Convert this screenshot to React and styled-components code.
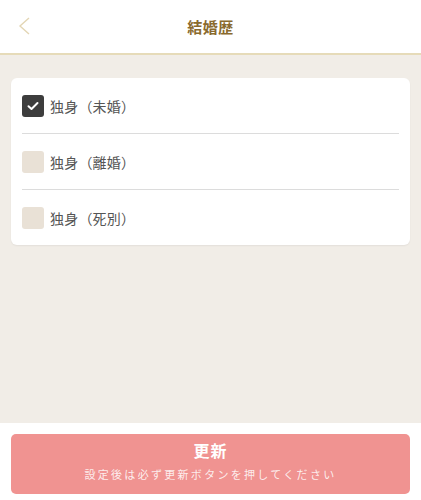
import React, { useState } from "react";
import styled, { createGlobalStyle } from "styled-components";

const Global = createGlobalStyle`
  html, body { margin: 0; padding: 0; height: 100%; }
  body { font-family: "Noto Sans CJK JP", "Noto Sans", sans-serif; background: #f1ede7; }
  #root { height: 100%; }
`;

const Page = styled.div`
  height: 500px;
  display: flex;
  flex-direction: column;
  background: #f1ede7;
`;

const Header = styled.header`
  height: 53px;
  background: #fff;
  border-bottom: 2px solid #e6dbb9;
  display: flex;
  align-items: center;
  justify-content: center;
  position: relative;
  flex-shrink: 0;
`;

const Back = styled.button`
  position: absolute;
  left: 12px;
  top: 14px;
  width: 24px;
  height: 24px;
  padding: 0;
  border: none;
  background: none;
  display: flex;
  align-items: center;
  justify-content: center;
`;

const Title = styled.h1`
  margin: 0;
  font-size: 15px;
  font-weight: 700;
  color: #8a6a2e;
  letter-spacing: 0.5px;
`;

const Main = styled.main`
  flex: 1;
  padding: 23px 11px 0;
`;

const Card = styled.div`
  background: #fff;
  border-radius: 6px;
  padding: 0 11px;
  box-shadow: 0 1px 2px rgba(0, 0, 0, 0.06);
`;

const Row = styled.label`
  height: 55px;
  display: flex;
  align-items: center;
  gap: 6px;
  border-top: ${(p) => (p.$first ? "none" : "1px solid #dcdcdc")};
  cursor: pointer;
`;

const Box = styled.span`
  width: 22px;
  height: 22px;
  border-radius: 3px;
  background: ${(p) => (p.$checked ? "#3d3d3d" : "#e9e1d6")};
  display: flex;
  align-items: center;
  justify-content: center;
  flex-shrink: 0;
`;

const Label = styled.span`
  font-size: 14px;
  color: #555;
  letter-spacing: 0.2px;
`;

const Footer = styled.footer`
  background: #fff;
  padding: 11px 11px 6px;
  flex-shrink: 0;
`;

const Submit = styled.button`
  width: 100%;
  height: 60px;
  border: none;
  border-radius: 5px;
  background: #f09391;
  display: flex;
  flex-direction: column;
  align-items: center;
  justify-content: center;
  gap: 7px;
  padding: 0 0 6px;
  font-family: inherit;
  color: #fff;
`;

const SubmitMain = styled.span`
  font-size: 16px;
  font-weight: 700;
  letter-spacing: 1px;
  line-height: 20px;
`;

const SubmitSub = styled.span`
  font-size: 11px;
  letter-spacing: 2.3px;
  line-height: 15px;
  color: rgba(255, 255, 255, 0.85);
`;

const options = ["独身（未婚）", "独身（離婚）", "独身（死別）"];

export default function App() {
  const [sel, setSel] = useState(0);
  return (
    <Page>
      <Global />
      <Header>
        <Back aria-label="戻る">
          <svg width="14" height="20" viewBox="0 0 14 20">
            <path d="M12 2 L3 10 L12 18" fill="none" stroke="#e3d6b4" strokeWidth="1.4" />
          </svg>
        </Back>
        <Title>結婚歴</Title>
      </Header>
      <Main>
        <Card>
          {options.map((o, i) => (
            <Row key={o} $first={i === 0} onClick={() => setSel(i)}>
              <Box $checked={sel === i}>
                {sel === i && (
                  <svg width="12" height="10" viewBox="0 0 12 10">
                    <path d="M1.5 5.2 L4.5 8 L10.5 2" fill="none" stroke="#fff" strokeWidth="2" strokeLinecap="round" strokeLinejoin="round" />
                  </svg>
                )}
              </Box>
              <Label>{o}</Label>
            </Row>
          ))}
        </Card>
      </Main>
      <Footer>
        <Submit>
          <SubmitMain>更新</SubmitMain>
          <SubmitSub>設定後は必ず更新ボタンを押してください</SubmitSub>
        </Submit>
      </Footer>
    </Page>
  );
}
